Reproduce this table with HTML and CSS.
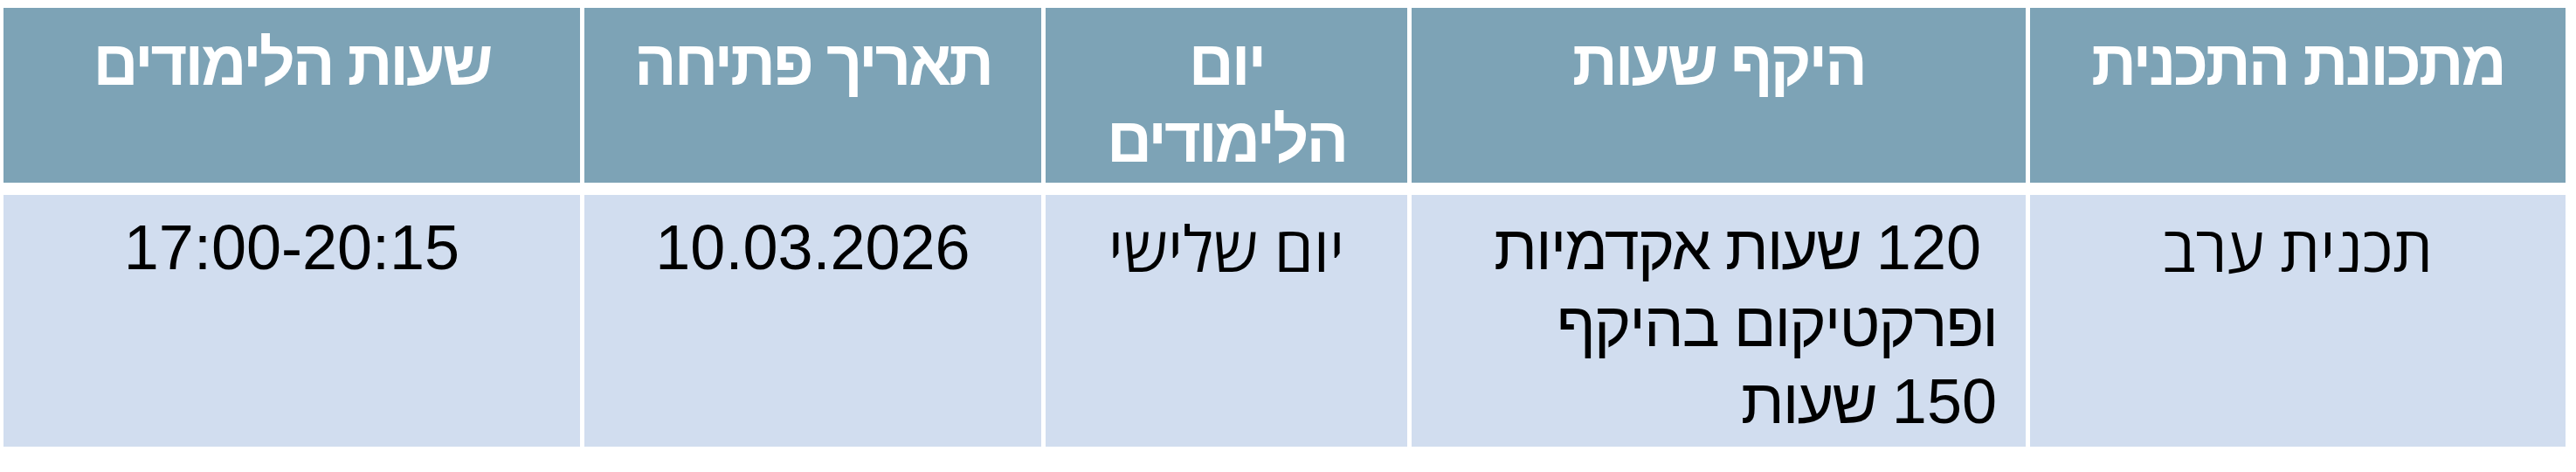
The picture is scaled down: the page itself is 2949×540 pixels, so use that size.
FILE: index.html
```html
<!DOCTYPE html>
<html lang="he" dir="rtl">
<head>
<meta charset="utf-8">
<title>מתכונת התכנית</title>
<link rel="stylesheet" href="styles.css">
</head>
<body>
<div class="page">
  <div class="table">
    <div class="cell head">מתכונת התכנית</div>
    <div class="cell head">היקף שעות</div>
    <div class="cell head">יום<br>הלימודים</div>
    <div class="cell head">תאריך פתיחה</div>
    <div class="cell head">שעות הלימודים</div>

    <div class="cell body alt">תכנית ערב</div>
    <div class="cell body start">&nbsp;<span class="num">120</span> שעות אקדמיות<br>ופרקטיקום בהיקף<br><span class="num">150</span> שעות</div>
    <div class="cell body alt">יום שלישי</div>
    <div class="cell body">10.03.2026</div>
    <div class="cell body">17:00-20:15</div>
  </div>
</div>
</body>
</html>
```

FILE: styles.css
```css
html, body {
  margin: 0;
  padding: 0;
  background: #ffffff;
}

.page {
  padding: 9px 12px 0 4px;
}

.table {
  display: grid;
  width: 2933px;
  grid-template-columns: 613px 703px 414px 523px 660px;
  grid-template-rows: 200px 288px;
  column-gap: 5px;
  row-gap: 14px;
  font-family: "Liberation Sans", Arial, sans-serif;
  font-size: 72px;
  line-height: 88px;
}

.cell {
  text-align: center;
  box-sizing: border-box;
}

.head {
  background: #7da3b6;
  color: #ffffff;
  font-weight: bold;
  letter-spacing: -3px;
  padding-top: 19px;
}

.body {
  background: #d1ddef;
  color: #000000;
  padding-top: 16px;
}

.alt {
  font-family: "Open Sans", "DejaVu Sans", sans-serif;
}

.start {
  text-align: right;
  padding-right: 33px;
  letter-spacing: -2px;
}

.num {
  letter-spacing: 0;
}
```
